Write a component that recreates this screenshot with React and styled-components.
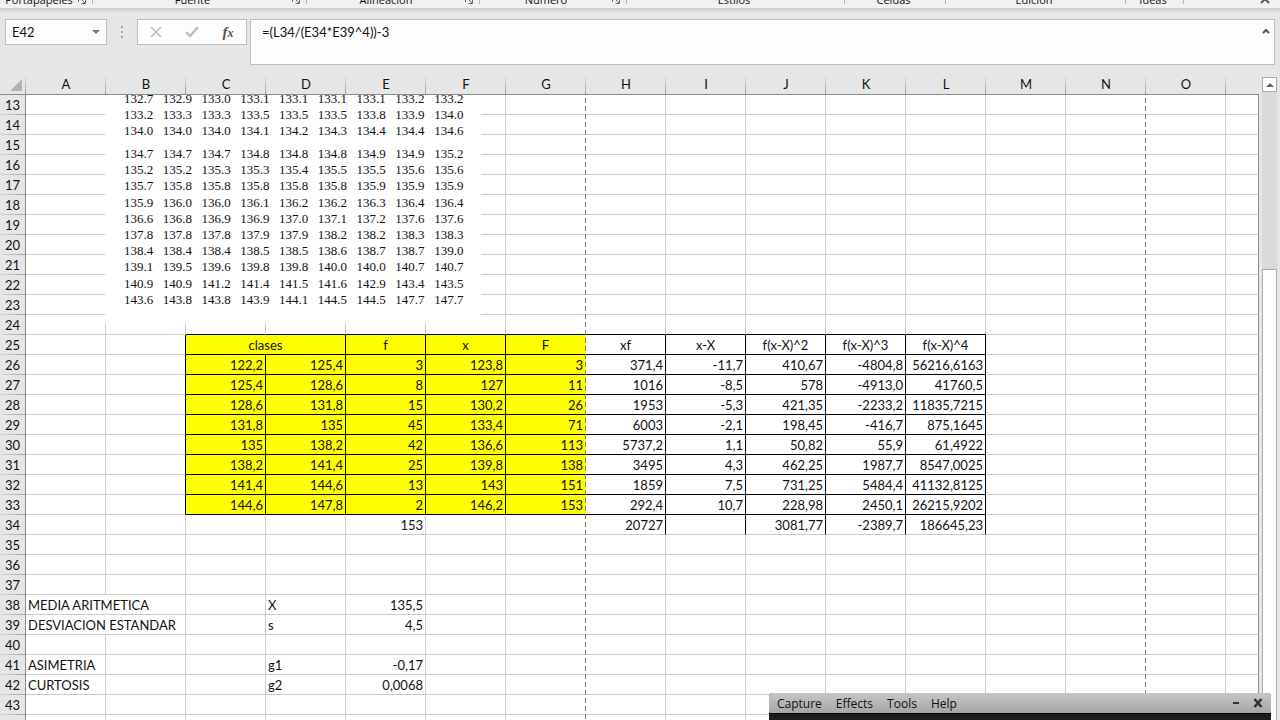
import React, { useState } from 'react'
import styled, { createGlobalStyle, css } from 'styled-components'

const columns = ['A', 'B', 'C', 'D', 'E', 'F', 'G', 'H', 'I', 'J', 'K', 'L', 'M', 'N', 'O']
const rowNumbers = Array.from({ length: 32 }, (_, i) => i + 13)

const ribbonGroups = [
  { name: 'Portapapeles', width: 93, launcher: true },
  { name: 'Fuente', width: 214, launcher: true },
  { name: 'Alineación', width: 173, launcher: true },
  { name: 'Número', width: 147, launcher: true },
  { name: 'Estilos', width: 218 },
  { name: 'Celdas', width: 101 },
  { name: 'Edición', width: 180 },
  { name: 'Ideas', width: 58 },
]

// values of columns C to L
const tableRows = {
  26: ['122,2', '125,4', '3', '123,8', '3', '371,4', '-11,7', '410,67', '-4804,8', '56216,6163'],
  27: ['125,4', '128,6', '8', '127', '11', '1016', '-8,5', '578', '-4913,0', '41760,5'],
  28: ['128,6', '131,8', '15', '130,2', '26', '1953', '-5,3', '421,35', '-2233,2', '11835,7215'],
  29: ['131,8', '135', '45', '133,4', '71', '6003', '-2,1', '198,45', '-416,7', '875,1645'],
  30: ['135', '138,2', '42', '136,6', '113', '5737,2', '1,1', '50,82', '55,9', '61,4922'],
  31: ['138,2', '141,4', '25', '139,8', '138', '3495', '4,3', '462,25', '1987,7', '8547,0025'],
  32: ['141,4', '144,6', '13', '143', '151', '1859', '7,5', '731,25', '5484,4', '41132,8125'],
  33: ['144,6', '147,8', '2', '146,2', '153', '292,4', '10,7', '228,98', '2450,1', '26215,9202'],
  34: ['', '', '153', '', '', '20727', '', '3081,77', '-2389,7', '186645,23'],
}

const headings = { C: 'clases', E: 'f', F: 'x', G: 'F', H: 'xf', I: 'x-X', J: 'f(x-X)^2', K: 'f(x-X)^3', L: 'f(x-X)^4' }

const summary = {
  38: { A: 'MEDIA ARITMETICA', D: 'X', E: '135,5' },
  39: { A: 'DESVIACION ESTANDAR', D: 's', E: '4,5' },
  41: { A: 'ASIMETRIA', D: 'g1', E: '-0,17' },
  42: { A: 'CURTOSIS', D: 'g2', E: '0,0068' },
}

const samples = [
  {
    gap: 0,
    lines: [
      '132.7 132.9 133.0 133.1 133.1 133.1 133.1 133.2 133.2',
      '133.2 133.3 133.3 133.5 133.5 133.5 133.8 133.9 134.0',
      '134.0 134.0 134.0 134.1 134.2 134.3 134.4 134.4 134.6',
    ],
  },
  {
    gap: 7,
    lines: [
      '134.7 134.7 134.7 134.8 134.8 134.8 134.9 134.9 135.2',
      '135.2 135.2 135.3 135.3 135.4 135.5 135.5 135.6 135.6',
      '135.7 135.8 135.8 135.8 135.8 135.8 135.9 135.9 135.9',
    ],
  },
  {
    gap: 1,
    lines: [
      '135.9 136.0 136.0 136.1 136.2 136.2 136.3 136.4 136.4',
      '136.6 136.8 136.9 136.9 137.0 137.1 137.2 137.6 137.6',
      '137.8 137.8 137.8 137.9 137.9 138.2 138.2 138.3 138.3',
      '138.4 138.4 138.4 138.5 138.5 138.6 138.7 138.7 139.0',
      '139.1 139.5 139.6 139.8 139.8 140.0 140.0 140.7 140.7',
    ],
  },
  {
    gap: 1,
    lines: [
      '140.9 140.9 141.2 141.4 141.5 141.6 142.9 143.4 143.5',
      '143.6 143.8 143.8 143.9 144.1 144.5 144.5 147.7 147.7',
    ],
  },
]

function cellOf(col, row) {
  const index = columns.indexOf(col)
  const inTable = index >= 2 && index <= 11
  const cell = { text: '', align: 'right' }
  if (row === 25 && headings[col]) {
    cell.text = headings[col]
    cell.align = 'center'
  } else if (tableRows[row] && inTable) {
    cell.text = tableRows[row][index - 2]
  } else if (summary[row] && summary[row][col]) {
    cell.text = summary[row][col]
    cell.align = col === 'E' ? 'right' : 'left'
  }
  cell.filled = row >= 25 && row <= 33 && index >= 2 && index <= 6
  cell.bottom = row >= 24 && row <= 33 && inTable ? '#000' : '#ccc'
  cell.right = '#ccc'
  if (row >= 25 && row <= 33 && index >= 1 && index <= 11) cell.right = '#000'
  if (row === 34 && index >= 7 && index <= 11) cell.right = '#000'
  if (col === 'G' || col === 'N') cell.right = 'transparent'
  if (col === 'A' && (row === 38 || row === 39)) cell.right = 'transparent'
  return cell
}

function Ribbon() {
  return (
    <RibbonBar>
      {ribbonGroups.map((group) => (
        <RibbonGroup key={group.name} $width={group.width}>
          <span>{group.name}</span>
          {group.launcher && (
            <Launcher aria-label={`Opciones de ${group.name}`}>
              <svg width="8" height="8" viewBox="0 0 8 8" fill="none" stroke="#666">
                <path d="M.5 6V.5H6M3 3l4 4M7.5 3.5v4h-4" />
              </svg>
            </Launcher>
          )}
        </RibbonGroup>
      ))}
      <Collapse aria-label="Contraer la cinta">
        <svg width="10" height="7" viewBox="0 0 10 7" fill="none" stroke="#555" strokeWidth="2">
          <path d="M1 6l4-4 4 4" />
        </svg>
      </Collapse>
    </RibbonBar>
  )
}

function FormulaBar() {
  const [name, setName] = useState('E42')
  const [formula, setFormula] = useState('=(L34/(E34*E39^4))-3')
  return (
    <FormulaRow>
      <NameBox>
        <input aria-label="Cuadro de nombres" value={name} onChange={(e) => setName(e.target.value)} />
        <button aria-label="Nombres definidos">
          <svg width="8" height="4" viewBox="0 0 8 4">
            <path d="M0 0h8L4 4z" fill="#777" />
          </svg>
        </button>
      </NameBox>
      <Grip>
        <svg width="2" height="12" viewBox="0 0 2 12" fill="#a6a6a6">
          <path d="M0 0h2v2H0zM0 5h2v2H0zM0 10h2v2H0z" />
        </svg>
      </Grip>
      <FormulaButtons>
        <button aria-label="Cancelar">
          <svg width="12" height="12" viewBox="0 0 12 12" stroke="#bdbdbd" strokeWidth="1.6">
            <path d="M1 1l10 10M11 1L1 11" />
          </svg>
        </button>
        <button aria-label="Introducir">
          <svg width="14" height="12" viewBox="0 0 14 12" fill="none" stroke="#bdbdbd" strokeWidth="2.4">
            <path d="M1 6l4 4 8-9" />
          </svg>
        </button>
        <FunctionButton aria-label="Insertar función">
          f<small>x</small>
        </FunctionButton>
      </FormulaButtons>
      <FormulaBox>
        <textarea aria-label="Barra de fórmulas" value={formula} onChange={(e) => setFormula(e.target.value)} />
        <button aria-label="Contraer la barra de fórmulas">
          <svg width="8" height="6" viewBox="0 0 8 6" fill="none" stroke="#555" strokeWidth="2">
            <path d="M1 5l3-3 3 3" />
          </svg>
        </button>
      </FormulaBox>
    </FormulaRow>
  )
}

function SampleData() {
  return (
    <SamplePicture>
      <table>
        {samples.map((group, g) => (
          <SampleGroup key={g} $gap={group.gap}>
            {group.lines.map((line) => (
              <tr key={line}>
                {line.split(' ').map((value, i) => (
                  <td key={i}>{value}</td>
                ))}
              </tr>
            ))}
          </SampleGroup>
        ))}
      </table>
    </SamplePicture>
  )
}

function Grid() {
  return (
    <GridArea>
      <Sheet>
        <colgroup>
          <RowHeadCol />
          {columns.map((col) => (
            <DataCol key={col} />
          ))}
          <col />
        </colgroup>
        <thead>
          <tr>
            <Corner aria-label="Seleccionar todo">
              <svg width="12" height="12" viewBox="0 0 12 12">
                <path d="M12 0v12H0z" fill="#b4b4b4" />
              </svg>
            </Corner>
            {columns.map((col) => (
              <ColumnHead key={col} scope="col">{col}</ColumnHead>
            ))}
            <ColumnHead $last />
          </tr>
        </thead>
        <tbody>
          {rowNumbers.map((row) => (
            <tr key={row}>
              <RowHead scope="row">{row}</RowHead>
              {columns.map((col) => {
                if (row === 25 && col === 'D') return null
                const cell = cellOf(col, row)
                return (
                  <Cell
                    key={col}
                    colSpan={row === 25 && col === 'C' ? 2 : 1}
                    $align={cell.align}
                    $filled={cell.filled}
                    $right={cell.right}
                    $bottom={cell.bottom}
                  >
                    {cell.text}
                  </Cell>
                )
              })}
              <Cell $right="#8c8c8c" $bottom="#ccc" />
            </tr>
          ))}
        </tbody>
      </Sheet>
      <SampleData />
      <PageBreak $column={7} />
      <PageBreak $column={14} />
    </GridArea>
  )
}

function App() {
  return (
    <Window>
      <GlobalStyle />
      <Ribbon />
      <FormulaBar />
      <Workspace>
        <Grid />
        <ScrollBar>
          <button aria-label="Desplazar hacia arriba">
            <svg width="8" height="4" viewBox="0 0 8 4">
              <path d="M0 4h8L4 0z" fill="#666" />
            </svg>
          </button>
          <Track>
            <Thumb />
          </Track>
        </ScrollBar>
      </Workspace>
      <Recorder>
        <RecorderBar>
          <nav>
            <button>Capture</button>
            <button>Effects</button>
            <button>Tools</button>
            <button>Help</button>
          </nav>
          <button aria-label="Minimizar">
            <svg width="6" height="10" viewBox="0 0 6 10">
              <path d="M0 4h6v2H0z" fill="#333" />
            </svg>
          </button>
          <button aria-label="Cerrar">
            <svg width="10" height="10" viewBox="0 0 10 10" stroke="#333" strokeWidth="2.6">
              <path d="M1.5 1l7 8M8.5 1l-7 8" />
            </svg>
          </button>
        </RecorderBar>
      </Recorder>
    </Window>
  )
}

const GlobalStyle = createGlobalStyle`
  * {
    box-sizing: border-box;
  }
  body {
    margin: 0;
    background: #e6e6e6;
    font-family: Lato, 'Liberation Sans', sans-serif;
    font-size: 13px;
    color: #111;
  }
  button, input, textarea {
    font: inherit;
    color: inherit;
    border: 0;
    padding: 0;
    margin: 0;
    background: none;
    outline: none;
  }
  svg {
    display: block;
  }
`

const Window = styled.div`
  height: 100vh;
  overflow: hidden;
  display: flex;
  flex-direction: column;
`

// only the lower edge of the ribbon is in view
const RibbonBar = styled.header`
  display: flex;
  align-items: flex-end;
  height: 8px;
  flex-shrink: 0;
  overflow: hidden;
  background: #f1f1f1;
  font-family: 'Open Sans', sans-serif;
  font-size: 11px;
  line-height: 16px;
`

const RibbonGroup = styled.div`
  display: flex;
  align-items: flex-end;
  flex: 0 0 ${(props) => props.$width}px;
  height: 20px;
  padding-right: 4px;
  background: linear-gradient(#b5b5b5, #b5b5b5) right top / 1px 16px no-repeat;
  span {
    flex: 1;
    text-align: center;
  }
`

const Launcher = styled.button`
  width: 11px;
  padding-bottom: 4px;
`

const Collapse = styled.button`
  margin-left: auto;
  padding: 0 10px 4px 0;
`

const FormulaRow = styled.section`
  display: flex;
  align-items: flex-start;
  flex-shrink: 0;
  padding: 11px 5px 7px;
  background: linear-gradient(#cdcdcd, #e6e6e6 5px);
`

const box = css`
  display: flex;
  background: #fdfdfd;
  border: 1px solid #bdbdbd;
`

const NameBox = styled.div`
  ${box}
  width: 102px;
  height: 26px;
  input {
    width: 82px;
    padding-left: 6px;
  }
  button {
    flex: 1;
    padding-left: 4px;
  }
`

const Grip = styled.div`
  width: 30px;
  padding: 7px 14px;
`

const FormulaButtons = styled.div`
  ${box}
  width: 110px;
  height: 26px;
  button {
    flex: 1;
    display: flex;
    align-items: center;
    justify-content: center;
  }
`

const FunctionButton = styled.button`
  font-family: 'Liberation Serif', serif;
  font-size: 15px;
  font-style: italic;
  font-weight: 700;
  color: #555;
  small {
    font-size: 12px;
    padding-top: 2px;
  }
`

const FormulaBox = styled.div`
  ${box}
  flex: 1;
  height: 46px;
  margin-left: 3px;
  textarea {
    flex: 1;
    resize: none;
    padding: 3px 11px;
    line-height: 18px;
  }
  button {
    align-self: flex-start;
    padding: 8px 4px;
  }
`

const Workspace = styled.main`
  display: flex;
  flex: 1;
  min-height: 0;
`

const GridArea = styled.div`
  position: relative;
  flex: 1;
  overflow: hidden;
`

const Sheet = styled.table`
  width: 100%;
  table-layout: fixed;
  border-collapse: separate;
  border-spacing: 0;
  background: #fff;
`

const RowHeadCol = styled.col`
  width: 26px;
`

const DataCol = styled.col`
  width: 80px;
`

const ColumnHead = styled.th`
  height: 23px;
  padding: 3px 0 0;
  font-size: 13px;
  font-weight: 400;
  line-height: 19px;
  border-bottom: 1px solid #8c8c8c;
  background: ${(props) =>
    props.$last ? '#e6e6e6' : 'linear-gradient(#e6e6e6, #999) right bottom / 1px 20px no-repeat, #e6e6e6'};
`

const Corner = styled(ColumnHead)`
  svg {
    margin-left: 10px;
  }
`

const RowHead = styled.th`
  height: 20px;
  padding: 1px 0;
  font-weight: 400;
  line-height: 18px;
  text-align: center;
  border-right: 1px solid #8c8c8c;
  background: linear-gradient(to right, #dcdcdc, #a0a0a0) left bottom / 100% 1px no-repeat, #e6e6e6;
`

const Cell = styled.td`
  height: 20px;
  padding: 1px 2px 0;
  line-height: 18px;
  white-space: nowrap;
  text-align: ${(props) => props.$align};
  border-right: 1px solid ${(props) => props.$right};
  border-bottom: 1px solid ${(props) => props.$bottom};
  background: ${(props) => (props.$filled ? '#ff0' : 'none')};
`

// dashed print boundary, drawn over the right edge of a column
const PageBreak = styled.div`
  position: absolute;
  top: 23px;
  bottom: 0;
  left: ${(props) => 25 + props.$column * 80}px;
  width: 1px;
  background: repeating-linear-gradient(transparent 0 3px, #808080 3px 8px);
`

// floating picture pasted over the cells
const SamplePicture = styled.div`
  position: absolute;
  top: 23px;
  left: 105px;
  width: 376px;
  height: 228px;
  overflow: hidden;
  padding: 0 8px 0 19px;
  background: #fff;
  font-family: 'Liberation Serif', serif;
  table {
    width: 349px;
    margin-top: -4px;
    table-layout: fixed;
    border-collapse: collapse;
  }
  td {
    padding: 0;
    line-height: 16px;
  }
`

const SampleGroup = styled.tbody`
  tr:first-child td {
    padding-top: ${(props) => props.$gap}px;
  }
`

const ScrollBar = styled.aside`
  display: flex;
  flex-direction: column;
  width: 21px;
  padding: 5px 3px 0;
  background: #e6e6e6;
  button {
    height: 15px;
    display: flex;
    align-items: center;
    justify-content: center;
    background: #fff;
    border: 1px solid #ababab;
  }
`

const Track = styled.div`
  flex: 1;
  padding-top: 177px;
  display: flex;
  background: #d9d9d9;
`

const Thumb = styled.div`
  flex: 1;
  background: #fff;
  border: 1px solid #ababab;
  border-bottom: 0;
`

const Recorder = styled.section`
  position: absolute;
  right: 9px;
  bottom: 0;
  width: 502px;
  height: 27px;
  background: #1c1c1c;
  border-radius: 4px 4px 0 0;
`

const RecorderBar = styled.div`
  display: flex;
  align-items: center;
  gap: 14px;
  height: 21px;
  padding: 0 8px;
  border-bottom: 1px solid #000;
  border-radius: 4px 4px 0 0;
  background: linear-gradient(#c6c6c6, #a6a6a6);
  font-family: 'Open Sans', sans-serif;
  font-size: 12px;
  nav {
    display: flex;
    gap: 14px;
    flex: 1;
  }
`

export default App
